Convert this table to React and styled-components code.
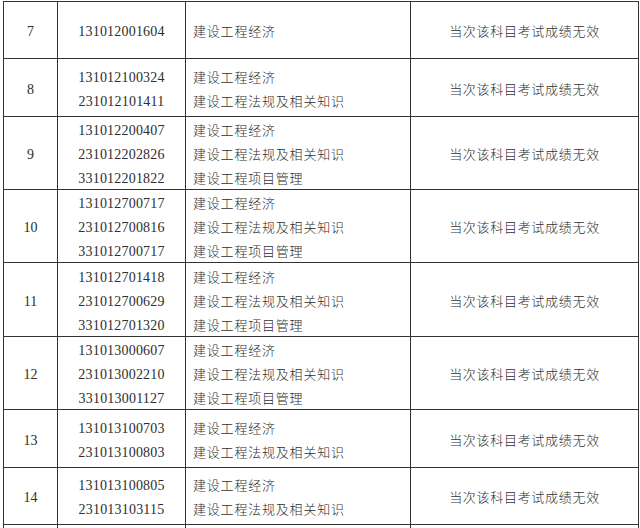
import React from 'react';
import styled, { createGlobalStyle } from 'styled-components';

const rows = [
  { no: 7, h: 57, ids: ['131012001604'], subjects: ['建设工程经济'] },
  { no: 8, h: 58, ids: ['131012100324', '231012101411'], subjects: ['建设工程经济', '建设工程法规及相关知识'] },
  { no: 9, h: 73, ids: ['131012200407', '231012202826', '331012201822'], subjects: ['建设工程经济', '建设工程法规及相关知识', '建设工程项目管理'] },
  { no: 10, h: 73, ids: ['131012700717', '231012700816', '331012700717'], subjects: ['建设工程经济', '建设工程法规及相关知识', '建设工程项目管理'] },
  { no: 11, h: 74, ids: ['131012701418', '231012700629', '331012701320'], subjects: ['建设工程经济', '建设工程法规及相关知识', '建设工程项目管理'] },
  { no: 12, h: 73, ids: ['131013000607', '231013002210', '331013001127'], subjects: ['建设工程经济', '建设工程法规及相关知识', '建设工程项目管理'] },
  { no: 13, h: 58, ids: ['131013100703', '231013100803'], subjects: ['建设工程经济', '建设工程法规及相关知识'] },
  { no: 14, h: 57, ids: ['131013100805', '231013103115'], subjects: ['建设工程经济', '建设工程法规及相关知识'] },
];

const RESULT = '当次该科目考试成绩无效';

export default function App() {
  return (
    <>
      <GlobalStyle />
      <Frame>
        <Table>
          <colgroup>
            <col style={{ width: 54 }} />
            <col style={{ width: 128 }} />
            <col style={{ width: 225 }} />
            <col style={{ width: 228 }} />
          </colgroup>
          <tbody>
            {rows.map((r) => (
              <Row key={r.no} $h={r.h}>
                <NumCell>
                  <Stack>{r.no}</Stack>
                </NumCell>
                <IdCell>
                  <Stack>
                    {r.ids.map((id) => (
                      <Line key={id}>{id}</Line>
                    ))}
                  </Stack>
                </IdCell>
                <SubjectCell>
                  <Stack>
                    {r.subjects.map((s, i) => (
                      <Line key={i}>{s}</Line>
                    ))}
                  </Stack>
                </SubjectCell>
                <ResultCell>
                  <Stack>{RESULT}</Stack>
                </ResultCell>
              </Row>
            ))}
            <Row $h={40}>
              <NumCell />
              <IdCell />
              <SubjectCell />
              <ResultCell />
            </Row>
          </tbody>
        </Table>
      </Frame>
    </>
  );
}

const GlobalStyle = createGlobalStyle`
  html, body {
    margin: 0;
    padding: 0;
    background: #fff;
  }
  body {
    font-family: "Liberation Serif", "Noto Sans CJK SC", serif;
    color: #2e2e2e;
  }
`;

const Frame = styled.div`
  height: 528px;
  overflow: hidden;
`;

const Table = styled.table`
  border-collapse: collapse;
  table-layout: fixed;
  width: 635px;
  margin: 1px 0 0 3px;
`;

const Row = styled.tr`
  height: ${(p) => p.$h}px;
`;

const Cell = styled.td`
  border: 1px solid #333;
  padding: 2px 0 0;
  vertical-align: middle;
  font-size: 14px;
  line-height: 24px;
`;

/* pulls the block back up so the top padding only nudges the text down */
const Stack = styled.div`
  margin-bottom: -2px;
`;

const NumCell = styled(Cell)`
  text-align: center;
`;

const IdCell = styled(Cell)`
  text-align: center;
  letter-spacing: 0.2px;
`;

const SubjectCell = styled(Cell)`
  padding-left: 7px;
  font-size: 13px;
  letter-spacing: 0.8px;
  font-weight: 300;
`;

const ResultCell = styled(Cell)`
  text-align: center;
  font-size: 13px;
  letter-spacing: 0.7px;
  font-weight: 300;
`;

const Line = styled.div`
  white-space: nowrap;
`;
